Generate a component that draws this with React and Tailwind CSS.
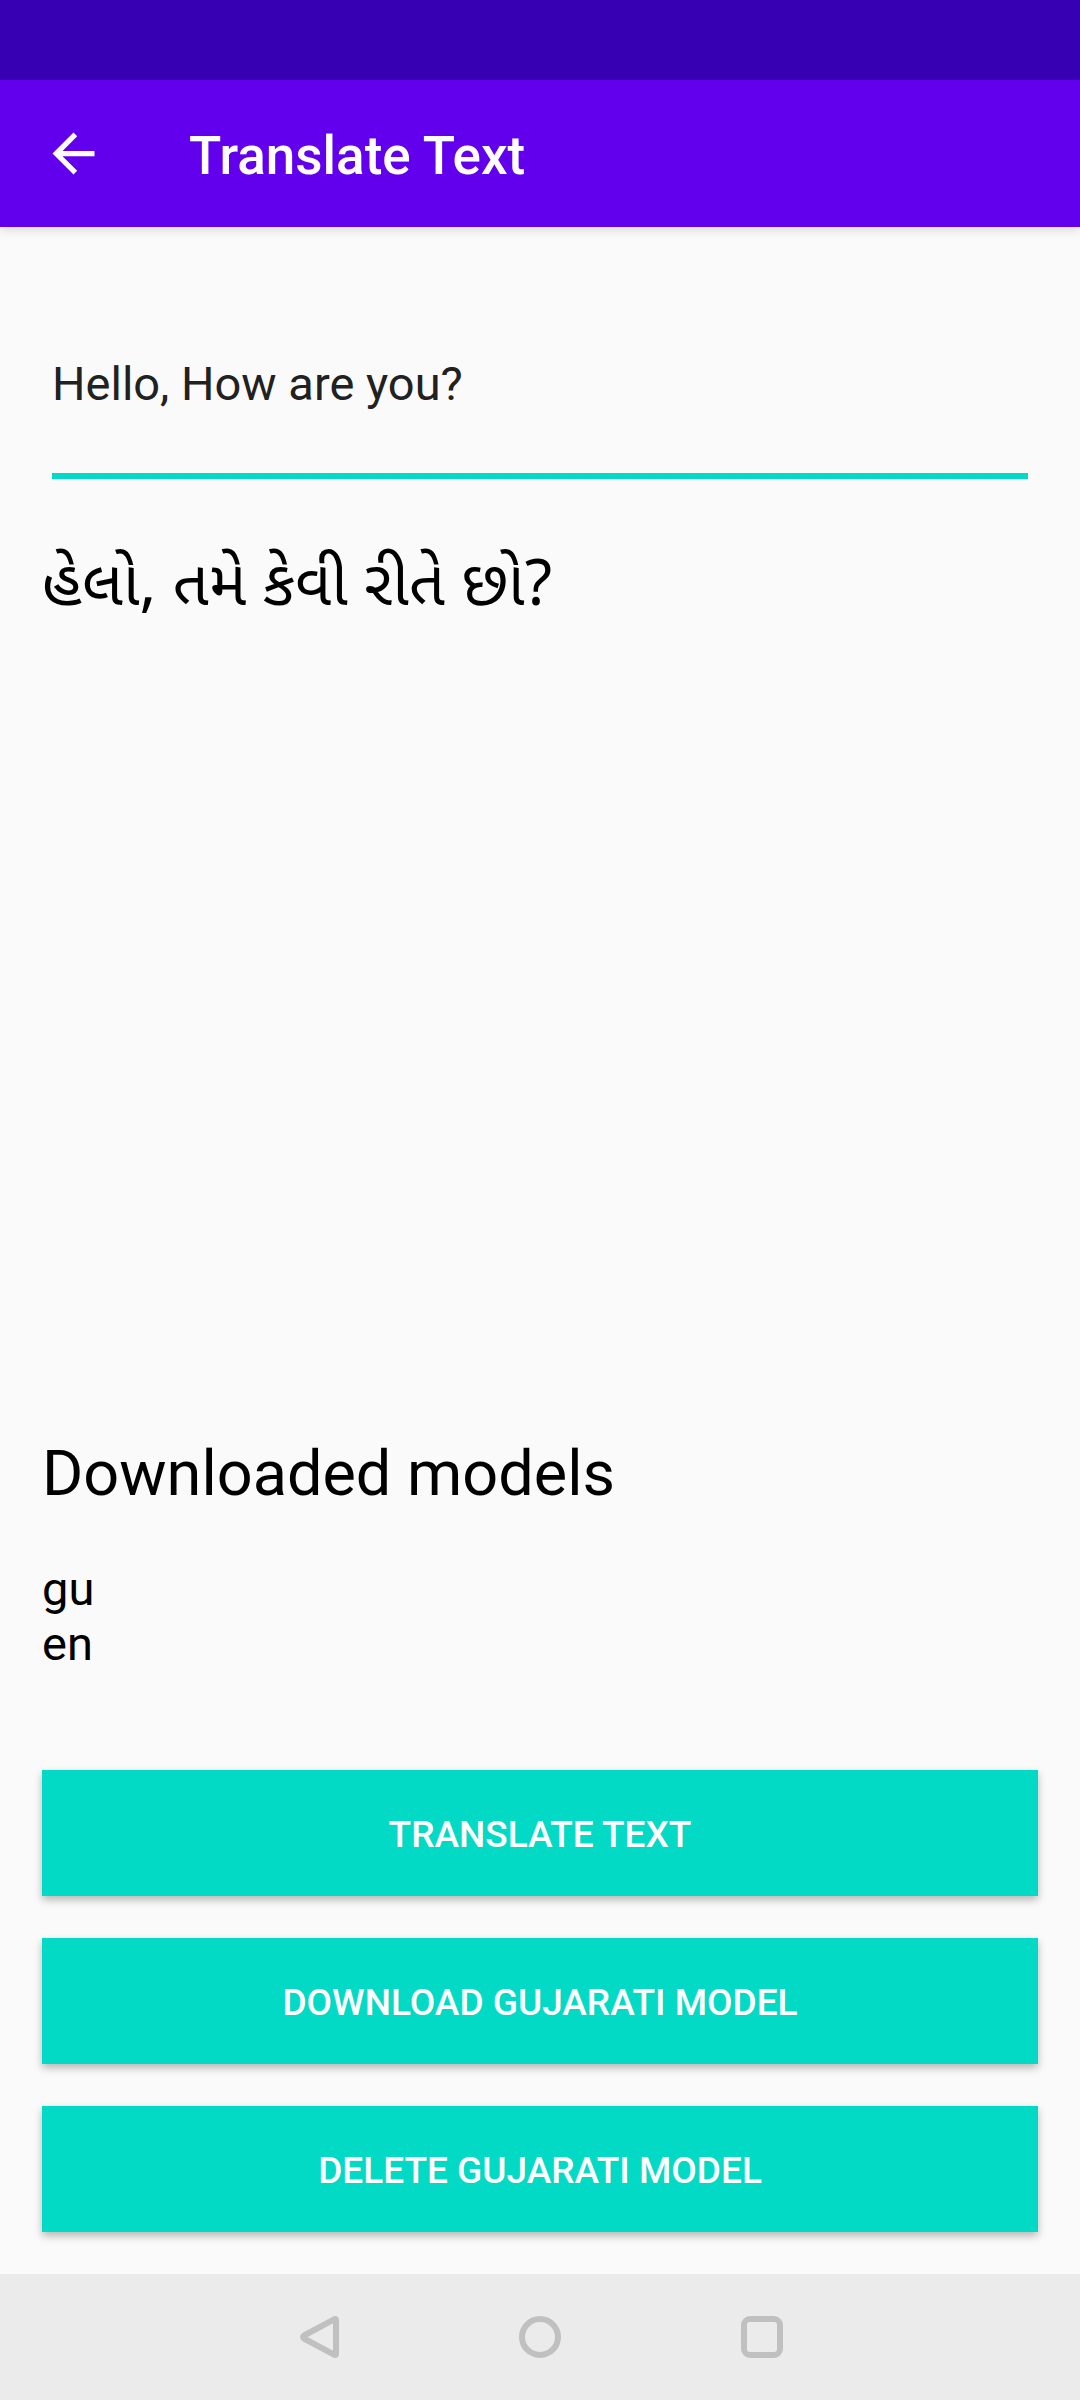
const models = ["gu", "en"];
const actions = ["TRANSLATE TEXT", "DOWNLOAD GUJARATI MODEL", "DELETE GUJARATI MODEL"];

function AppBar() {
  return (
    <header className="bg-[#6200ee] shadow-[0_3px_10px_rgba(0,0,0,0.13)]">
      <div className="h-20 bg-[#3700b3]" />
      <div className="flex h-[147px] items-center gap-[84px] px-[42px] text-white">
        <button type="button" aria-label="Navigate up">
          <svg viewBox="0 0 24 24" className="size-[63px]" fill="currentColor">
            <path d="M20 11H7.83l5.59-5.59L12 4l-8 8 8 8 1.41-1.41L7.83 13H20v-2z" />
          </svg>
        </button>
        <h1 className="pt-1 text-[53px] leading-[62px] font-medium">Translate Text</h1>
      </div>
    </header>
  );
}

function NavBar() {
  return (
    <nav className="flex h-[126px] items-center justify-center gap-[180px] bg-[#ebebeb] text-[#c0c0c0]">
      <button type="button" aria-label="Back">
        <svg viewBox="0 0 42 42" className="size-[42px]" fill="none" stroke="currentColor" strokeWidth="6" strokeLinejoin="round">
          <path d="M37.5 3.2c.8-.5 1.5-.2 1.5.8v34c0 1-.7 1.3-1.5.8L7 22.5c-1.3-.8-1.3-2.200 0-3z" />
        </svg>
      </button>
      <button type="button" aria-label="Home">
        <svg viewBox="0 0 42 42" className="size-[42px]" fill="none" stroke="currentColor" strokeWidth="6">
          <circle cx="21" cy="21" r="18" />
        </svg>
      </button>
      <button type="button" aria-label="Recent apps">
        <svg viewBox="0 0 42 42" className="size-[42px]" fill="none" stroke="currentColor" strokeWidth="6">
          <rect x="3" y="3" width="36" height="36" rx="6" />
        </svg>
      </button>
    </nav>
  );
}

export default function App() {
  return (
    <div className="flex min-h-screen flex-col bg-[#fafafa] font-[Roboto,'Noto_Sans',sans-serif] text-black">
      <AppBar />
      <main className="flex flex-1 flex-col px-[42px] pt-[84px] pb-[42px]">
        <div className="px-[10px]">
          <input
            type="text"
            aria-label="Text to translate"
            defaultValue="Hello, How are you?"
            className="block h-[168px] w-full border-b-[6px] border-[#03dac5] bg-transparent pb-[18px] text-[47px] text-[#212121] outline-none"
          />
        </div>
        <p lang="gu" className="mt-[60px] font-['Noto_Sans','Noto_Sans_Gujarati',sans-serif] text-[63px] leading-[84px]">
          હેલો, તમે કેવી રીતે છો?
        </p>
        <section className="mt-auto">
          <h2 className="text-[63px] leading-[74px]">Downloaded models</h2>
          <ul className="mt-[50px] text-[47px] leading-[55px]">
            {models.map((m) => (
              <li key={m}>{m}</li>
            ))}
          </ul>
        </section>
        <div className="mt-[99px] flex flex-col gap-[42px]">
          {actions.map((label) => (
            <button
              key={label}
              type="button"
              className="h-[126px] bg-[#03dac5] pt-[3px] text-[37px] font-medium text-white shadow-[0_4px_8px_rgba(0,0,0,0.27)]"
            >
              {label}
            </button>
          ))}
        </div>
      </main>
      <NavBar />
    </div>
  );
}
